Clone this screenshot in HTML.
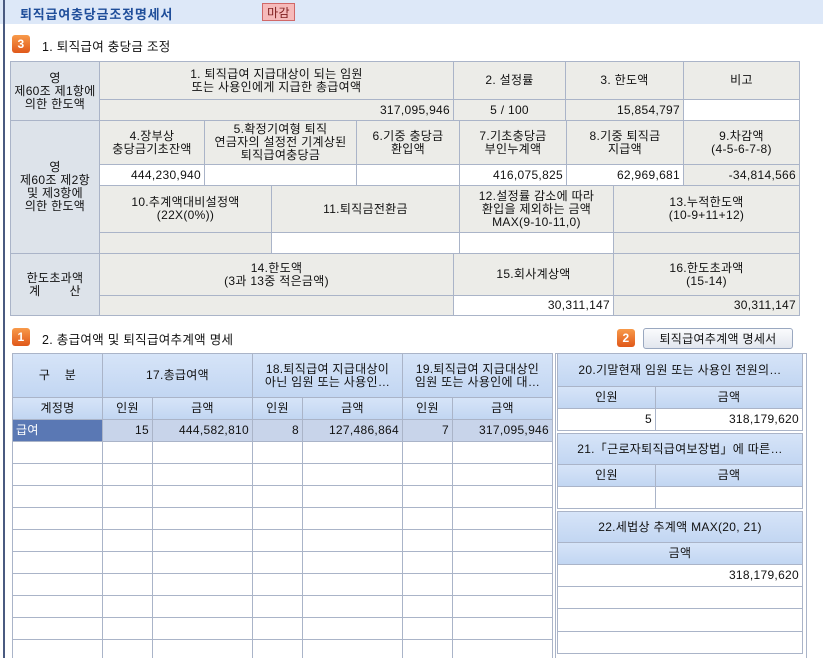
<!DOCTYPE html>
<html><head><meta charset="utf-8"><style>
*{margin:0;padding:0;box-sizing:border-box}
body{width:823px;height:658px;overflow:hidden;background:#fff;font-family:"Liberation Sans","Noto Sans CJK KR",sans-serif;font-size:12px;color:#111;position:relative;letter-spacing:0.3px}
.a{position:absolute}
.c{position:absolute;border:1px solid #aab4c8;display:flex;align-items:center;justify-content:center;text-align:center;line-height:13px;white-space:nowrap;overflow:hidden}
.g{background:#ecece8}.l{background:#dde3ea}.w{background:#fff}
.r{justify-content:flex-end;padding-right:3px}
.h{background:linear-gradient(#d6e4f8,#c2d6f2)}
.s{background:#c8d4ea}
.ic{position:absolute;width:18px;height:18px;border-radius:3px;background:linear-gradient(#f89a4a,#e0581a);color:#fff;font-weight:bold;font-size:12px;display:flex;align-items:center;justify-content:center}
</style></head><body>
<div class="a" style="left:0;top:0;width:823px;height:24px;background:#dde8f8"></div>
<div class="a" style="left:3px;top:0;width:2px;height:658px;background:#4a5a80"></div>
<div class="a" style="left:20px;top:4px;font-weight:bold;color:#1f4e9a;font-size:13px;letter-spacing:0.8px">퇴직급여충당금조정명세서</div>
<div class="a" style="left:262px;top:3px;width:33px;height:18px;background:#f6baba;border:1px solid #d06868;color:#802020;font-size:12px;display:flex;align-items:center;justify-content:center">마감</div>
<div class="ic" style="left:12px;top:35px">3</div>
<div class="a" style="left:42px;top:36px;font-size:12.5px">1. 퇴직급여 충당금 조정</div>

<div class="c l" style="left:10px;top:61px;width:90px;height:60px">영<br>제60조 제1항에<br>의한 한도액</div>
<div class="c g" style="left:99px;top:61px;width:355px;height:39px">1. 퇴직급여 지급대상이 되는 임원<br>또는 사용인에게 지급한 총급여액</div>
<div class="c g" style="left:453px;top:61px;width:113px;height:39px">2. 설정률</div>
<div class="c g" style="left:565px;top:61px;width:119px;height:39px">3. 한도액</div>
<div class="c g" style="left:683px;top:61px;width:117px;height:39px">비고</div>
<div class="c g r" style="left:99px;top:99px;width:355px;height:22px">317,095,946</div>
<div class="c g" style="left:453px;top:99px;width:113px;height:22px">5 / 100</div>
<div class="c g r" style="left:565px;top:99px;width:119px;height:22px">15,854,797</div>
<div class="c w" style="left:683px;top:99px;width:117px;height:22px"></div>

<div class="c l" style="left:10px;top:120px;width:90px;height:134px">영<br>제60조 제2항<br>및 제3항에<br>의한 한도액</div>
<div class="c g" style="left:99px;top:120px;width:106px;height:45px">4.장부상<br>충당금기초잔액</div>
<div class="c g" style="left:204px;top:120px;width:153px;height:45px">5.확정기여형 퇴직<br>연금자의 설정전 기계상된<br>퇴직급여충당금</div>
<div class="c g" style="left:356px;top:120px;width:104px;height:45px">6.기중 충당금<br>환입액</div>
<div class="c g" style="left:459px;top:120px;width:108px;height:45px">7.기초충당금<br>부인누계액</div>
<div class="c g" style="left:566px;top:120px;width:118px;height:45px">8.기중 퇴직금<br>지급액</div>
<div class="c g" style="left:683px;top:120px;width:117px;height:45px">9.차감액<br>(4-5-6-7-8)</div>
<div class="c w r" style="left:99px;top:164px;width:106px;height:22px">444,230,940</div>
<div class="c w" style="left:204px;top:164px;width:153px;height:22px"></div>
<div class="c w" style="left:356px;top:164px;width:104px;height:22px"></div>
<div class="c w r" style="left:459px;top:164px;width:108px;height:22px">416,075,825</div>
<div class="c w r" style="left:566px;top:164px;width:118px;height:22px">62,969,681</div>
<div class="c g r" style="left:683px;top:164px;width:117px;height:22px">-34,814,566</div>
<div class="c g" style="left:99px;top:185px;width:173px;height:48px">10.추계액대비설정액<br>(22X(0%))</div>
<div class="c g" style="left:271px;top:185px;width:189px;height:48px">11.퇴직금전환금</div>
<div class="c g" style="left:459px;top:185px;width:155px;height:48px">12.설정률 감소에 따라<br>환입을 제외하는 금액<br>MAX(9-10-11,0)</div>
<div class="c g" style="left:613px;top:185px;width:187px;height:48px">13.누적한도액<br>(10-9+11+12)</div>
<div class="c g" style="left:99px;top:232px;width:173px;height:22px"></div>
<div class="c w" style="left:271px;top:232px;width:189px;height:22px"></div>
<div class="c w" style="left:459px;top:232px;width:155px;height:22px"></div>
<div class="c g" style="left:613px;top:232px;width:187px;height:22px"></div>

<div class="c l" style="left:10px;top:253px;width:90px;height:63px">한도초과액<br>계&nbsp;&nbsp;&nbsp;&nbsp;&nbsp;&nbsp;&nbsp;&nbsp;산</div>
<div class="c g" style="left:99px;top:253px;width:355px;height:43px">14.한도액<br>(3과 13중 적은금액)</div>
<div class="c g" style="left:453px;top:253px;width:161px;height:43px">15.회사계상액</div>
<div class="c g" style="left:613px;top:253px;width:187px;height:43px">16.한도초과액<br>(15-14)</div>
<div class="c g" style="left:99px;top:295px;width:355px;height:21px"></div>
<div class="c w r" style="left:453px;top:295px;width:161px;height:21px">30,311,147</div>
<div class="c g r" style="left:613px;top:295px;width:187px;height:21px">30,311,147</div>

<div class="ic" style="left:12px;top:328px">1</div>
<div class="a" style="left:42px;top:329px;font-size:12.5px">2. 총급여액 및 퇴직급여추계액 명세</div>
<div class="ic" style="left:617px;top:329px">2</div>
<div class="a" style="left:643px;top:328px;width:150px;height:21px;border:1px solid #9aa8c0;border-radius:3px;background:linear-gradient(#fafbfd,#e2e6ee);display:flex;align-items:center;justify-content:center">퇴직급여추계액 명세서</div>

<div class="c h" style="left:12px;top:353px;width:91px;height:45px">구&nbsp;&nbsp;&nbsp;&nbsp;분</div>
<div class="c h" style="left:102px;top:353px;width:151px;height:45px">17.총급여액</div>
<div class="c h" style="left:252px;top:353px;width:151px;height:45px">18.퇴직급여 지급대상이<br>아닌 임원 또는 사용인…</div>
<div class="c h" style="left:402px;top:353px;width:151px;height:45px">19.퇴직급여 지급대상인<br>임원 또는 사용인에 대…</div>
<div class="c h" style="left:12px;top:397px;width:91px;height:23px">계정명</div>
<div class="c h" style="left:102px;top:397px;width:51px;height:23px">인원</div>
<div class="c h" style="left:152px;top:397px;width:101px;height:23px">금액</div>
<div class="c h" style="left:252px;top:397px;width:51px;height:23px">인원</div>
<div class="c h" style="left:302px;top:397px;width:101px;height:23px">금액</div>
<div class="c h" style="left:402px;top:397px;width:51px;height:23px">인원</div>
<div class="c h" style="left:452px;top:397px;width:101px;height:23px">금액</div>
<div class="c" style="left:12px;top:419px;width:91px;height:23px;background:#5a78b4;color:#fff;justify-content:flex-start;padding-left:3px">급여</div>
<div class="c s r" style="left:102px;top:419px;width:51px;height:23px">15</div>
<div class="c s r" style="left:152px;top:419px;width:101px;height:23px">444,582,810</div>
<div class="c s r" style="left:252px;top:419px;width:51px;height:23px">8</div>
<div class="c s r" style="left:302px;top:419px;width:101px;height:23px">127,486,864</div>
<div class="c s r" style="left:402px;top:419px;width:51px;height:23px">7</div>
<div class="c s r" style="left:452px;top:419px;width:101px;height:23px">317,095,946</div>
<svg class="a" style="left:12px;top:441px" width="541" height="217">
<g stroke="#aab4c8" stroke-width="1" fill="none">
<path d="M0.5 0V217M90.5 0V217M140.5 0V217M240.5 0V217M290.5 0V217M390.5 0V217M440.5 0V217M540.5 0V217"/>
<path d="M0 22.5H541M0 44.5H541M0 66.5H541M0 88.5H541M0 110.5H541M0 132.5H541M0 154.5H541M0 176.5H541M0 198.5H541"/>
</g></svg>

<div class="a" style="left:555px;top:353px;width:252px;height:305px;border:1px solid #aab4c8;border-bottom:none"></div>
<div class="c h" style="left:557px;top:353px;width:246px;height:34px">20.기말현재 임원 또는 사용인 전원의…</div>
<div class="c h" style="left:557px;top:386px;width:99px;height:23px">인원</div>
<div class="c h" style="left:655px;top:386px;width:148px;height:23px">금액</div>
<div class="c w r" style="left:557px;top:408px;width:99px;height:23px">5</div>
<div class="c w r" style="left:655px;top:408px;width:148px;height:23px">318,179,620</div>
<div class="c h" style="left:557px;top:433px;width:246px;height:32px">21.「근로자퇴직급여보장법」에 따른…</div>
<div class="c h" style="left:557px;top:464px;width:99px;height:23px">인원</div>
<div class="c h" style="left:655px;top:464px;width:148px;height:23px">금액</div>
<div class="c w" style="left:557px;top:486px;width:99px;height:23px"></div>
<div class="c w" style="left:655px;top:486px;width:148px;height:23px"></div>
<div class="c h" style="left:557px;top:511px;width:246px;height:32px">22.세법상 추계액 MAX(20, 21)</div>
<div class="c h" style="left:557px;top:542px;width:246px;height:23px">금액</div>
<div class="c w r" style="left:557px;top:564px;width:246px;height:23px">318,179,620</div>
<div class="c w" style="left:557px;top:586px;width:246px;height:23px"></div>
<div class="c w" style="left:557px;top:608px;width:246px;height:24px"></div>
<div class="c w" style="left:557px;top:631px;width:246px;height:23px"></div>
</body></html>
